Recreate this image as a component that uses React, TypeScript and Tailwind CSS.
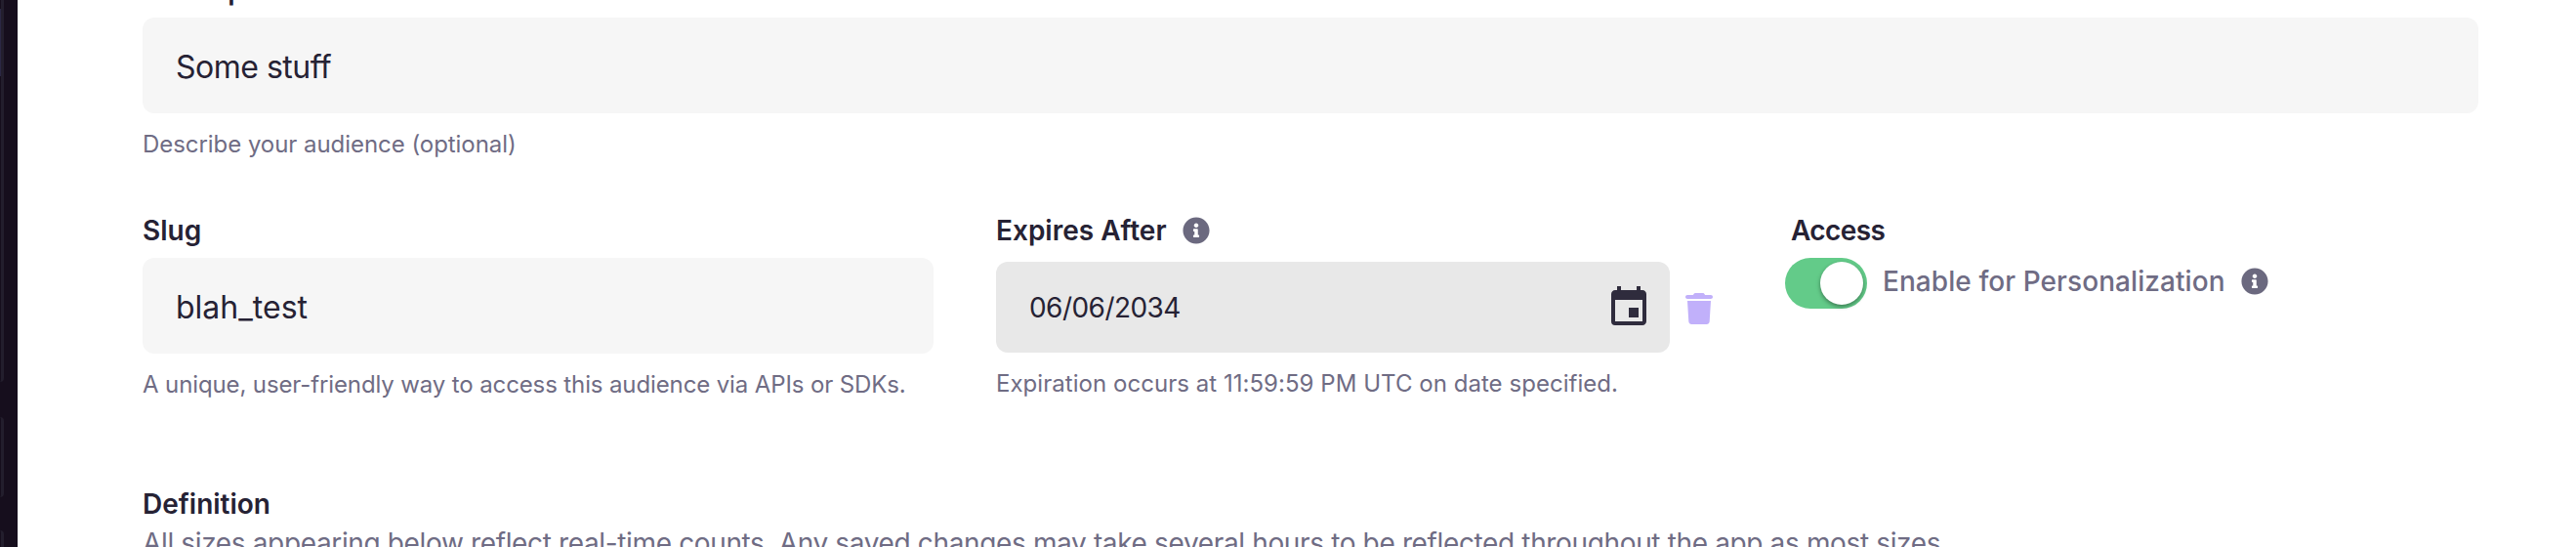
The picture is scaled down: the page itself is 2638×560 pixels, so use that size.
import React from "react";
import { FaInfoCircle } from "react-icons/fa";
import { MdEvent } from "react-icons/md";
import { FaTrash } from "react-icons/fa6";

const label = "text-[28px] leading-[36px] font-semibold text-[#262234] whitespace-nowrap shrink-0";
const helper = "mt-4 h-8 shrink-0 text-[24px] leading-[32px] text-[#6f6c84] whitespace-nowrap";

function Info() {
  return <FaInfoCircle className="size-7 shrink-0 text-[#6b697f]" />;
}

export default function App() {
  return (
    <div className="flex h-[560px] w-[2638px] overflow-hidden bg-white font-['Inter',sans-serif]">
      <aside className="flex w-[18px] shrink-0 flex-col bg-[#160e1d]">
        <div className="h-[391px] w-1 shrink-0 rounded-br-[12px] border-r-[3px] border-[#231e2d]">
          <div className="mt-[9px] h-[69px] w-px bg-[#2b2744]" />
        </div>
        <div className="mt-9 h-[82px] w-1 shrink-0 rounded-r-[12px] border-r-[3px] border-[#231e2d]" />
        <div className="mt-[34px] h-[40px] w-1 shrink-0 rounded-tr-[12px] border-r-[3px] border-[#231e2d]" />
      </aside>

      <main className="flex w-[2520px] shrink-0 flex-col pl-32">
        <div className={`-mt-[28px] h-[46px] ${label}`}>Description</div>
        <div className="flex h-[98px] w-[2392px] shrink-0 items-center rounded-[12px] bg-[#f6f6f6] pt-[3px] pl-[34px] text-[32px] tracking-[-0.5px] text-[#262234]">
          Some stuff
        </div>
        <div className={`tracking-[-0.05px] ${helper}`}>Describe your audience (optional)</div>

        <div className="mt-[54px] flex h-[196px] shrink-0">
          <section className="w-[874px] shrink-0">
            <div className={`h-[46px] ${label}`}>Slug</div>
            <div className="flex h-[98px] w-[810px] items-center rounded-[12px] bg-[#f6f6f6] pt-[3px] pl-[34px] text-[32px] text-[#262234]">
              blah_test
            </div>
            <div className={`tracking-[-0.12px] ${helper}`}>
              A unique, user-friendly way to access this audience via APIs or SDKs.
            </div>
          </section>

          <section className="w-[808px] shrink-0">
            <div className={`flex h-[50px] items-start gap-4 ${label}`}>
              <span>Expires After</span>
              <span className="pt-1"><Info /></span>
            </div>
            <div className="flex items-center">
              <div className="flex h-[93px] w-[690px] items-center justify-between rounded-[12px] bg-[#e8e8e8] pr-[18px] pl-[34px] text-[28px] tracking-[-0.55px] text-[#262234]">
                <span>06/06/2034</span>
                <MdEvent className="size-12 text-[#2f2c3d]" />
              </div>
              <FaTrash className="mt-[3px] ml-[14px] size-8 text-[#c1b0fa]" />
            </div>
            <div className={`tracking-[0.04px] ${helper}`}>
              Expiration occurs at 11:59:59 PM UTC on date specified.
            </div>
          </section>

          <section className="shrink-0">
            <div className={`h-[46px] pl-[6px] tracking-[-0.6px] ${label}`}>Access</div>
            <div className="flex h-[52px] items-center">
              <div className="flex h-[52px] w-[84px] items-center justify-end rounded-full bg-[#63cb89] pr-1">
                <div className="size-11 rounded-full bg-white shadow-[0_2px_4px_rgba(0,0,0,0.4)]" />
              </div>
              <span className="mb-1 ml-4 text-[28px] leading-[36px] font-medium tracking-[0.07px] whitespace-nowrap text-[#6f6c84]">
                Enable for Personalization
              </span>
              <span className="mb-1 ml-4"><Info /></span>
            </div>
          </section>
        </div>

        <div className={`mt-[84px] h-[36px] ${label}`}>Definition</div>
        <div className="mt-0.5 shrink-0 text-[28px] leading-[40px] tracking-[-0.36px] whitespace-nowrap text-[#6f6c84]">
          All sizes appearing below reflect real-time counts. Any saved changes may take several hours to be reflected throughout the app as most sizes
        </div>
      </main>
    </div>
  );
}
